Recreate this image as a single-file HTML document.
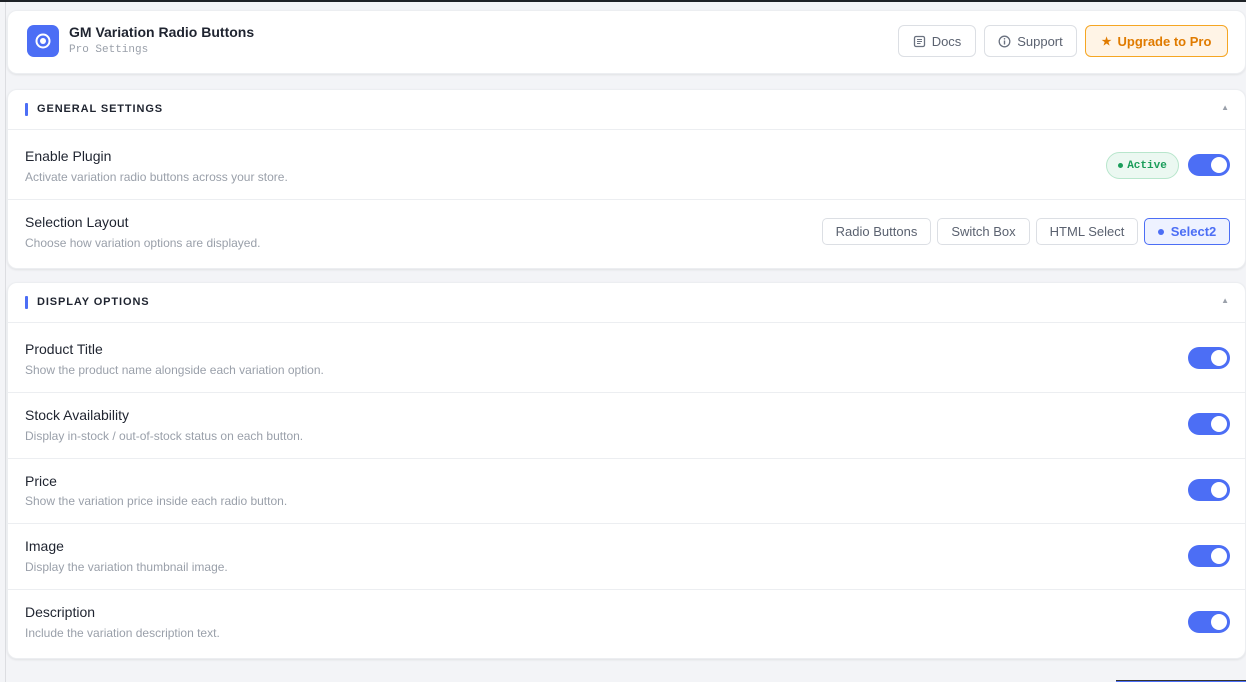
<!DOCTYPE html>
<html><head><meta charset="utf-8"><style>
*{box-sizing:border-box;margin:0;padding:0}
body{width:1246px;height:682px;overflow:hidden;background:#f3f4f7;font-family:"Liberation Sans",sans-serif;position:relative}
.topbar{position:absolute;left:0;top:0;width:1246px;height:2px;background:#1e2227}
.lline{position:absolute;left:5px;top:2px;width:1px;height:680px;background:#dcdde1}
.card{position:absolute;left:7px;width:1239px;background:#fff;border-radius:10px;box-shadow:0 1px 2px rgba(0,0,0,.08);border:1px solid #eceef1}
.abs{position:absolute}
.btn{position:absolute;height:32px;border:1px solid #dcdfe4;border-radius:6px;font-size:13px;color:#5b6270;display:flex;align-items:center;justify-content:center;gap:6px;background:#fff}
.sh{position:absolute;left:0;right:0;height:40px;border-bottom:1px solid #eceef1}
.sh .bar{position:absolute;left:17px;top:13px;width:3px;height:13px;background:#4c6ef5;border-radius:1px}
.sh .t{position:absolute;left:29px;top:13px;font-size:11px;font-weight:bold;letter-spacing:.9px;color:#1f2430}
.sh .c{position:absolute;right:16px;top:13px;font-size:8px;color:#9aa0aa}
.row{position:absolute;left:0;right:0;border-bottom:1px solid #eceef1}
.row .l{position:absolute;left:17px;font-size:14px;color:#1f2430}
.row .d{position:absolute;left:17px;font-size:12px;color:#9aa0aa}
.tg{position:absolute;right:15px;width:42px;height:22px;border-radius:11px;background:#4c6ef5}
.tg::after{content:"";position:absolute;right:3px;top:3px;width:16px;height:16px;border-radius:50%;background:#fff}
.opt{position:absolute;top:218px;height:27px;border:1px solid #dcdfe4;border-radius:5px;font-size:13px;color:#5b6270;display:flex;align-items:center;justify-content:center;background:#fff}
</style></head><body>
<div class="topbar"></div><div class="lline"></div>

<div class="card" style="top:10px;height:64px">
  <div class="abs" style="left:19px;top:14px;width:32px;height:32px;border-radius:7px;background:#4c6ef5">
    <svg width="32" height="32" viewBox="0 0 32 32"><circle cx="16" cy="16" r="6.5" fill="none" stroke="#fff" stroke-width="2"/><circle cx="16" cy="16" r="3" fill="#fff"/></svg>
  </div>
  <div class="abs" style="left:61px;top:13px;font-size:14px;font-weight:bold;color:#1f2430">GM Variation Radio Buttons</div>
  <div class="abs" style="left:61px;top:33px;font-size:11px;font-family:'Liberation Mono',monospace;color:#9aa0aa">Pro Settings</div>
</div>
<div class="btn" style="left:898px;top:25px;width:78px"><svg width="13" height="13" viewBox="0 0 13 13"><rect x="1.5" y="1.5" width="10" height="10" rx="1.5" fill="none" stroke="#6b7280" stroke-width="1.3"/><path d="M4 4.5h5M4 6.5h5M4 8.5h3.5" stroke="#6b7280" stroke-width="1.1"/></svg>Docs</div>
<div class="btn" style="left:984px;top:25px;width:93px"><svg width="13" height="13" viewBox="0 0 13 13"><circle cx="6.5" cy="6.5" r="5.3" fill="none" stroke="#6b7280" stroke-width="1.3"/><path d="M6.5 5.5v4" stroke="#6b7280" stroke-width="1.4"/><circle cx="6.5" cy="3.8" r=".8" fill="#6b7280"/></svg>Support</div>
<div class="btn" style="left:1085px;top:25px;width:143px;background:#fff4e6;border-color:#f5a623;color:#e07b00;font-weight:bold"><span style="font-size:11px">★</span>Upgrade to Pro</div>

<div class="card" style="top:89px;height:180px">
  <div class="sh"><div class="bar"></div><div class="t">GENERAL SETTINGS</div><div class="c">▲</div></div>
  <div class="row" style="top:40px;height:70px"><div class="l" style="top:18px">Enable Plugin</div><div class="d" style="top:40px">Activate variation radio buttons across your store.</div>
    <div class="abs" style="left:1098px;top:22px;width:73px;height:27px;border-radius:14px;background:#ebf8f1;border:1px solid #b8e6cc;color:#1a9d5a;font-family:'Liberation Mono',monospace;font-weight:bold;font-size:11px;display:flex;align-items:center;justify-content:center;gap:4px"><span style="width:5px;height:5px;border-radius:50%;background:#1a9d5a"></span>Active</div>
    <div class="tg" style="top:24px"></div></div>
  <div class="row" style="top:110px;height:70px;border:none"><div class="l" style="top:14px">Selection Layout</div><div class="d" style="top:36px">Choose how variation options are displayed.</div></div>
</div>
<div class="opt" style="left:822px;width:109px">Radio Buttons</div>
<div class="opt" style="left:937px;width:93px">Switch Box</div>
<div class="opt" style="left:1036px;width:102px">HTML Select</div>
<div class="opt" style="left:1144px;width:86px;border-color:#4c6ef5;background:#eef2ff;color:#4c6ef5;font-weight:bold;gap:7px"><span style="width:6px;height:6px;border-radius:50%;background:#4c6ef5"></span>Select2</div>

<div class="card" style="top:282px;height:377px">
  <div class="sh"><div class="bar"></div><div class="t">DISPLAY OPTIONS</div><div class="c">▲</div></div>
  <div class="row" style="top:40px;height:70px"><div class="l" style="top:18px">Product Title</div><div class="d" style="top:40px">Show the product name alongside each variation option.</div><div class="tg" style="top:24px"></div></div>
  <div class="row" style="top:110px;height:66px"><div class="l" style="top:14px">Stock Availability</div><div class="d" style="top:36px">Display in-stock / out-of-stock status on each button.</div><div class="tg" style="top:20px"></div></div>
  <div class="row" style="top:176px;height:65px"><div class="l" style="top:14px">Price</div><div class="d" style="top:35px">Show the variation price inside each radio button.</div><div class="tg" style="top:20px"></div></div>
  <div class="row" style="top:241px;height:66px"><div class="l" style="top:14px">Image</div><div class="d" style="top:36px">Display the variation thumbnail image.</div><div class="tg" style="top:21px"></div></div>
  <div class="row" style="top:307px;height:68px;border:none"><div class="l" style="top:14px">Description</div><div class="d" style="top:36px">Include the variation description text.</div><div class="tg" style="top:21px"></div></div>
</div>
<div class="abs" style="left:1116px;top:680px;width:130px;height:2px;background:#4c6ef5;border-top:1px solid #333"></div>
</body></html>
